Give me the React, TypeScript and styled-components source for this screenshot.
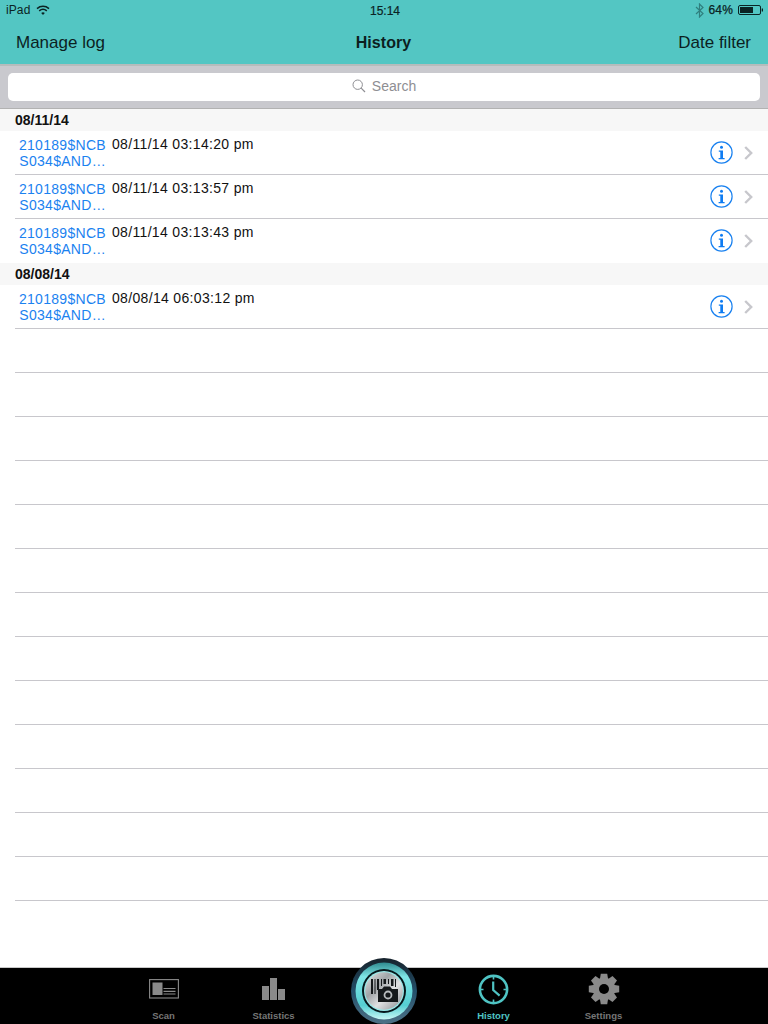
import React from "react";
import styled, { createGlobalStyle } from "styled-components";

const Global = createGlobalStyle`
  html, body { margin: 0; padding: 0; background: #fff; }
  body { font-family: "Liberation Sans", Arial, sans-serif; }
  * { box-sizing: border-box; }
`;
const Page = styled.div`
  width: 768px; height: 1024px; display: flex; flex-direction: column; overflow: hidden; background: #fff; position: relative;
`;
const Header = styled.header`
  height: 64px; background: #53c6c3; display: flex; flex-direction: column; flex: none;
`;
const StatusBar = styled.div`
  height: 20px; display: grid; grid-template-columns: 1fr auto 1fr; align-items: center; padding: 0 4px 0 6px; font-size: 12px; color: #0b2323;
`;
const StatusLeft = styled.div` display: flex; align-items: center; gap: 6px; letter-spacing: 0.1px; `;
const StatusTime = styled.div` -webkit-text-stroke: 0.2px #0b2323; margin-top: 1px; `;
const StatusRight = styled.div` display: flex; align-items: center; justify-content: flex-end; gap: 5px; -webkit-text-stroke: 0.25px #0b2323; letter-spacing: 0.15px; `;
const NavBar = styled.div`
  height: 44px; display: grid; grid-template-columns: 1fr auto 1fr; align-items: center; padding: 1px 17px 0 16px; font-size: 17px; color: #0c1f1f;
`;
const NavTitle = styled.div` font-weight: 700; font-size: 16px; letter-spacing: 0.05px; `;
const NavRight = styled.div` justify-self: end; `;
const SearchBar = styled.div`
  height: 45px; flex: none; background: #c9c9ce; border-top: 2px solid #b5bcbc; border-bottom: 1px solid #b2b2b2; padding: 7px 8px 6px;
`;
const SearchField = styled.div`
  height: 28px; background: #fff; border-radius: 5px; display: flex; align-items: center; justify-content: center; gap: 6px; font-size: 14px; color: #8e8e93; padding-bottom: 2px;
`;
const List = styled.div` flex: 1; min-height: 0; `;
const SectionHead = styled.div`
  height: 22px; background: #f7f7f7; padding-left: 15px; display: flex; align-items: center; font-size: 14px; font-weight: 700; color: #111;
`;
const Row = styled.div<{ $flat?: boolean }>`
  height: 44px; margin-left: 15px; border-bottom: 1px solid ${p => (p.$flat ? "transparent" : "#c8c7cc")}; display: flex; align-items: flex-start;
`;
const Code = styled.div`
  width: 91px; margin-top: 6px; text-align: right; font-size: 14px; line-height: 16px; letter-spacing: 0.3px; color: #1b82f0;
`;
const Stamp = styled.div`
  margin-left: 6px; margin-top: 5px; font-size: 14px; line-height: 16px; letter-spacing: 0.33px; color: #111;
`;
const Actions = styled.div`
  margin-left: auto; display: flex; align-items: center; gap: 11px; height: 43px; padding-right: 15px;
`;
const TabBar = styled.nav`
  height: 57px; flex: none; background: #000; border-top: 1px solid #c8c8c8; display: grid; grid-template-columns: repeat(5, 110px); justify-content: center; margin-left: -1px;
`;
const Tab = styled.div<{ $active?: boolean }>`
  display: flex; flex-direction: column; align-items: center; justify-content: flex-end; height: 56px; padding-bottom: 3px;
  font-size: 9.5px; font-weight: 700; color: ${p => (p.$active ? "#4fc4c4" : "#767676")};
`;
const TabIcon = styled.div` height: 40px; display: flex; align-items: center; justify-content: center; margin-bottom: 1px; `;
const CenterButton = styled.div`
  position: absolute; left: 351px; top: 958px; width: 66px; height: 66px; overflow: hidden;
`;

const Wifi = () => (
  <svg width="14" height="11" viewBox="0 0 14 11" fill="none" stroke="#0b2323" strokeWidth="1.5">
    <path d="M1 3.6C4.5.6 9.5.6 13 3.6" />
    <path d="M3.2 5.9C5.4 4 8.6 4 10.8 5.9" />
    <path d="M7 10L5.2 7.9C6.3 7 7.7 7 8.8 7.9Z" fill="#0b2323" stroke="none" />
  </svg>
);
const Bluetooth = () => (
  <svg width="9" height="15" viewBox="0 0 9 15" fill="none" stroke="#2f7f7e" strokeWidth="1.2">
    <path d="M1 4L8 10.5 4.5 14V1L8 4.5 1 11" />
  </svg>
);
const Battery = () => (
  <svg width="26" height="10" viewBox="0 0 26 10">
    <rect x="0.5" y="0.5" width="22" height="9" rx="1.5" fill="none" stroke="#0b2323" />
    <rect x="2" y="2" width="13" height="6" fill="#0b2323" />
    <rect x="23.7" y="3.5" width="1.3" height="3" fill="#0b2323" />
  </svg>
);
const Magnifier = () => (
  <svg width="14" height="14" viewBox="0 0 14 14" fill="none" stroke="#8e8e93" strokeWidth="1">
    <circle cx="5.7" cy="5.7" r="4.7" />
    <path d="M9.2 9.2L13 13" strokeWidth="1.2" />
  </svg>
);
const Info = () => (
  <svg width="23" height="23" viewBox="0 0 23 23">
    <circle cx="11.5" cy="11.5" r="10.6" fill="none" stroke="#1b82f0" strokeWidth="1.2" />
    <circle cx="11.5" cy="6.2" r="1.5" fill="#0f7cf2" />
    <path d="M8.8 9.4h4.2v7.6h1.6v1.3H8.6V17h1.7v-6.3H8.8z" fill="#0f7cf2" />
  </svg>
);
const Chevron = () => (
  <svg width="9" height="14" viewBox="0 0 9 14" fill="none" stroke="#c7c7cc" strokeWidth="2.4">
    <path d="M1.2 1L7.2 7 1.2 13" />
  </svg>
);
const ScanIcon = () => (
  <svg width="30" height="20" viewBox="0 0 30 20">
    <rect x="0.6" y="0.6" width="28.8" height="18.4" fill="none" stroke="#8a8a8a" strokeWidth="1.1" />
    <rect x="3.5" y="3.5" width="10" height="12.5" fill="#8a8a8a" />
    <path d="M14.5 9.5h12M14.5 12.3h12M14.5 15h12" stroke="#8a8a8a" strokeWidth="1.2" />
  </svg>
);
const StatsIcon = () => (
  <svg width="23" height="22" viewBox="0 0 23 22" fill="#8a8a8a">
    <rect x="0" y="8" width="7" height="14" />
    <rect x="8" y="0" width="7" height="22" />
    <rect x="16" y="11" width="7" height="11" />
  </svg>
);
const ClockIcon = () => (
  <svg width="31" height="31" viewBox="0 0 31 31" fill="none" stroke="#4fc4c4">
    <circle cx="15.5" cy="15.5" r="13.6" strokeWidth="2.6" />
    <path d="M15.5 2.5v3M15.5 25.5v3M2.5 15.5h3M25.5 15.5h3" strokeWidth="1.6" />
    <path d="M15.2 7.5v8.5l6.4 5.6" strokeWidth="2.2" />
  </svg>
);
const GearIcon = () => {
  const teeth = Array.from({ length: 8 }, (_, i) => i * 45);
  return (
    <svg width="32" height="32" viewBox="0 0 32 32">
      {teeth.map(a => (
        <path key={a} d="M12.8 0.8h6.4l1 6h-8.4z" fill="#8a8a8a" transform={`rotate(${a} 16 16)`} />
      ))}
      <circle cx="16" cy="16" r="11.2" fill="#8a8a8a" />
      <circle cx="16" cy="16" r="5" fill="#000" />
    </svg>
  );
};
const CameraButton = () => (
  <svg width="66" height="66" viewBox="0 0 66 66">
    <defs>
      <linearGradient id="outer" x1="0" y1="0" x2="0" y2="1">
        <stop offset="0" stopColor="#16222b" />
        <stop offset="0.5" stopColor="#24506a" />
        <stop offset="1" stopColor="#4d7186" />
      </linearGradient>
      <linearGradient id="ring" x1="0" y1="0" x2="0" y2="1">
        <stop offset="0" stopColor="#2f8b90" />
        <stop offset="0.25" stopColor="#7fe6e6" />
        <stop offset="0.75" stopColor="#55cfd2" />
        <stop offset="1" stopColor="#c8f8f6" />
      </linearGradient>
      <linearGradient id="metal" x1="0" y1="0" x2="1" y2="1">
        <stop offset="0" stopColor="#e8eaeb" />
        <stop offset="0.35" stopColor="#a0a4a7" />
        <stop offset="0.6" stopColor="#e0e2e3" />
        <stop offset="1" stopColor="#85898c" />
      </linearGradient>
    </defs>
    <circle cx="33" cy="33" r="33" fill="url(#outer)" />
    <circle cx="33" cy="33" r="28.5" fill="url(#ring)" />
    <circle cx="33" cy="33" r="22" fill="#06181c" />
    <circle cx="33" cy="33" r="20" fill="#9ae8e8" />
    <circle cx="33" cy="33" r="18.8" fill="url(#metal)" />
    <path d="M20 21h2v15h-2zM23.5 21h1v15h-1zM26 21h2v11h-2zM30 21h1v7h-1zM32.5 21h2.5v5h-2.5zM37 21h1v5h-1zM40 21h2.5v7H40zM44 21h1v8h-1z" fill="#15191b" />
    <path d="M27 31h4l2-2.5h6l2 2.5h6v13H27z" fill="#15191b" />
    <circle cx="37" cy="37" r="4.4" fill="#b9bdbf" />
    <circle cx="37" cy="37" r="2.6" fill="#15191b" />
  </svg>
);

const section1 = ["08/11/14 03:14:20 pm", "08/11/14 03:13:57 pm", "08/11/14 03:13:43 pm"];
const section2 = ["08/08/14 06:03:12 pm"];

const LogRow = ({ stamp, flat }: { stamp: string; flat?: boolean }) => (
  <Row $flat={flat}>
    <Code>210189$NCB<br />S034$AND…</Code>
    <Stamp>{stamp}</Stamp>
    <Actions><Info /><Chevron /></Actions>
  </Row>
);

export default function App() {
  return (
    <Page>
      <Global />
      <Header>
        <StatusBar>
          <StatusLeft>iPad <Wifi /></StatusLeft>
          <StatusTime>15:14</StatusTime>
          <StatusRight><Bluetooth />64% <Battery /></StatusRight>
        </StatusBar>
        <NavBar>
          <div>Manage log</div>
          <NavTitle>History</NavTitle>
          <NavRight>Date filter</NavRight>
        </NavBar>
      </Header>
      <SearchBar>
        <SearchField><Magnifier />Search</SearchField>
      </SearchBar>
      <List>
        <SectionHead>08/11/14</SectionHead>
        {section1.map((s, i) => <LogRow key={s} stamp={s} flat={i === section1.length - 1} />)}
        <SectionHead>08/08/14</SectionHead>
        {section2.map(s => <LogRow key={s} stamp={s} />)}
        {Array.from({ length: 13 }, (_, i) => <Row key={i} />)}
      </List>
      <TabBar>
        <Tab><TabIcon><ScanIcon /></TabIcon>Scan</Tab>
        <Tab><TabIcon><StatsIcon /></TabIcon>Statistics</Tab>
        <div />
        <Tab $active><TabIcon><ClockIcon /></TabIcon>History</Tab>
        <Tab><TabIcon><GearIcon /></TabIcon>Settings</Tab>
      </TabBar>
      <CenterButton><CameraButton /></CenterButton>
    </Page>
  );
}
